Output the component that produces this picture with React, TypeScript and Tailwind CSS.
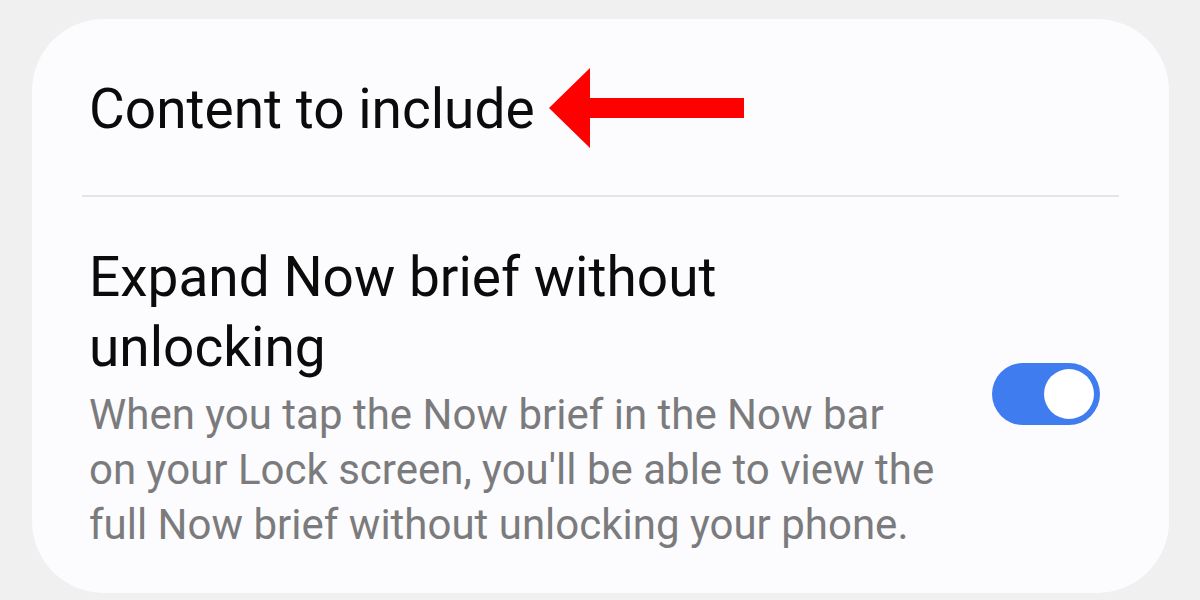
import React from "react";

function Arrow() {
  return (
    <svg width="196" height="82" viewBox="0 0 196 82" className="shrink-0">
      <polygon points="0,40 41,0 41,30 195,30 195,50 41,50 41,80" fill="#ff0000" />
    </svg>
  );
}

function Toggle() {
  return (
    <div className="mb-[7px] flex h-[62px] w-[108px] shrink-0 items-center justify-end rounded-full bg-[#3e7cf0] pr-[6px]">
      <div className="h-[50px] w-[50px] rounded-full bg-white" />
    </div>
  );
}

export default function App() {
  return (
    <div
      className="h-[600px] w-[1200px] overflow-hidden bg-[#f0f0f1] pl-[32px] pt-[19px]"
      style={{ fontFamily: "Roboto, 'Noto Sans', sans-serif" }}
    >
      <div className="h-[574px] w-[1137px] rounded-[72px] bg-[#fcfcfe]">
        {/* Section header */}
        <div className="flex h-[176px] items-start pl-[57px] pt-[63px]">
          <span className="text-[55px] leading-none text-[#0b0b0b]">Content to include</span>
          <div className="ml-[14px] -mt-[14px]">
            <Arrow />
          </div>
        </div>
        <div className="mx-[50px] h-[2px] bg-[#e5e5e8]" />

        {/* Setting row */}
        <div className="flex items-center pl-[57px] pr-[69px] pt-[45px]">
          <div className="flex-1 pr-[20px]">
            <div className="text-[55px] leading-[70px] text-[#0b0b0b]">
              Expand Now brief without
              <br />
              unlocking
            </div>
            <div className="mt-[5px] text-[42px] leading-[55px] text-[#7b7b7d]">
              When you tap the Now brief in the Now bar
              <br />
              on your Lock screen, you'll be able to view the
              <br />
              full Now brief without unlocking your phone.
            </div>
          </div>
          <Toggle />
        </div>
      </div>
    </div>
  );
}
